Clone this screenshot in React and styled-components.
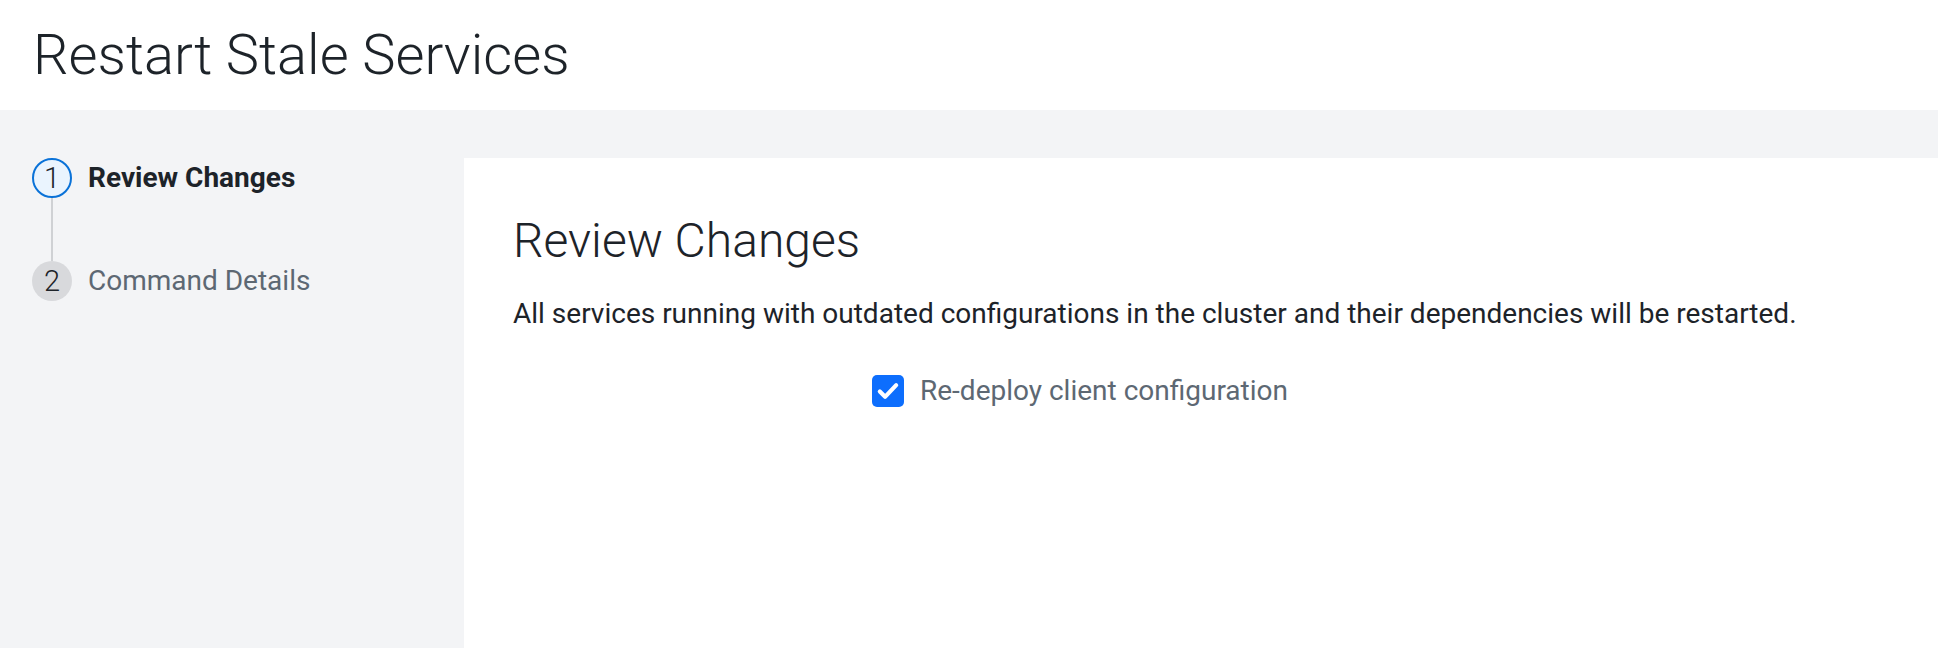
import styled, { createGlobalStyle } from "styled-components";

const GlobalStyle = createGlobalStyle`
  html, body {
    margin: 0;
    padding: 0;
    background: #f3f4f6;
    font-family: Roboto, "Liberation Sans", sans-serif;
    color: #1d2329;
  }
`;

const Page = styled.div`
  display: flex;
  flex-direction: column;
  min-height: 648px;
`;

const Header = styled.header`
  background: #ffffff;
  height: 110px;
  display: flex;
  align-items: center;
  padding-left: 33px;
`;

const PageTitle = styled.h1`
  margin: 0;
  font-size: 56px;
  font-weight: 300;
  line-height: 1;
  color: #1d2329;
`;

const Body = styled.div`
  flex: 1;
  display: flex;
`;

const Sidebar = styled.nav`
  width: 464px;
  flex-shrink: 0;
  padding: 48px 0 0 32px;
  box-sizing: border-box;
`;

const Step = styled.div`
  display: flex;
  align-items: flex-start;
  gap: 16px;
  position: relative;
  padding-bottom: ${(p) => (p.last ? "0" : "63px")};
`;

const Connector = styled.span`
  position: absolute;
  left: 19px;
  top: 40px;
  width: 2px;
  height: 63px;
  background: #cfd1d4;
`;

const Bubble = styled.span`
  width: 40px;
  height: 40px;
  border-radius: 50%;
  box-sizing: border-box;
  display: flex;
  align-items: center;
  justify-content: center;
  font-size: 29px;
  font-weight: 300;
  color: #1d2329;
  background: ${(p) => (p.active ? "#eaf4fe" : "#d8d9dc")};
  border: ${(p) => (p.active ? "2px solid #0a72d8" : "none")};
  flex-shrink: 0;
`;

const StepLabel = styled.span`
  font-size: 28px;
  line-height: 40px;
  font-weight: ${(p) => (p.active ? 700 : 400)};
  color: ${(p) => (p.active ? "#1d2329" : "#5d6873")};
`;

const Panel = styled.main`
  flex: 1;
  margin-top: 48px;
  background: #ffffff;
  padding: 55px 49px 0;
`;

const Heading = styled.h2`
  margin: 0;
  font-size: 48px;
  font-weight: 300;
  line-height: 56px;
  color: #1d2329;
`;

const Lead = styled.p`
  margin: 24px 0 0;
  font-size: 28px;
  line-height: 42px;
  color: #1d2329;
`;

const CheckRow = styled.label`
  display: flex;
  align-items: center;
  gap: 16px;
  margin: 35px 0 0 359px;
  cursor: pointer;
`;

const Box = styled.span`
  width: 32px;
  height: 32px;
  border-radius: 5px;
  background: #0d6efd;
  display: flex;
  align-items: center;
  justify-content: center;
`;

const CheckText = styled.span`
  font-size: 28px;
  line-height: 42px;
  color: #5d6873;
`;

export default function App() {
  return (
    <Page>
      <GlobalStyle />
      <Header>
        <PageTitle>Restart Stale Services</PageTitle>
      </Header>
      <Body>
        <Sidebar>
          <Step>
            <Bubble active>1</Bubble>
            <StepLabel active>Review Changes</StepLabel>
            <Connector />
          </Step>
          <Step last>
            <Bubble>2</Bubble>
            <StepLabel>Command Details</StepLabel>
          </Step>
        </Sidebar>
        <Panel>
          <Heading>Review Changes</Heading>
          <Lead>
            All services running with outdated configurations in the cluster and their dependencies will be restarted.
          </Lead>
          <CheckRow>
            <Box>
              <svg width="28" height="28" viewBox="0 0 24 24" fill="none" stroke="#fff" strokeWidth="3.6" strokeLinecap="round" strokeLinejoin="round">
                <path d="M5 12.5l4.5 4.5L19 7" />
              </svg>
            </Box>
            <CheckText>Re-deploy client configuration</CheckText>
          </CheckRow>
        </Panel>
      </Body>
    </Page>
  );
}
